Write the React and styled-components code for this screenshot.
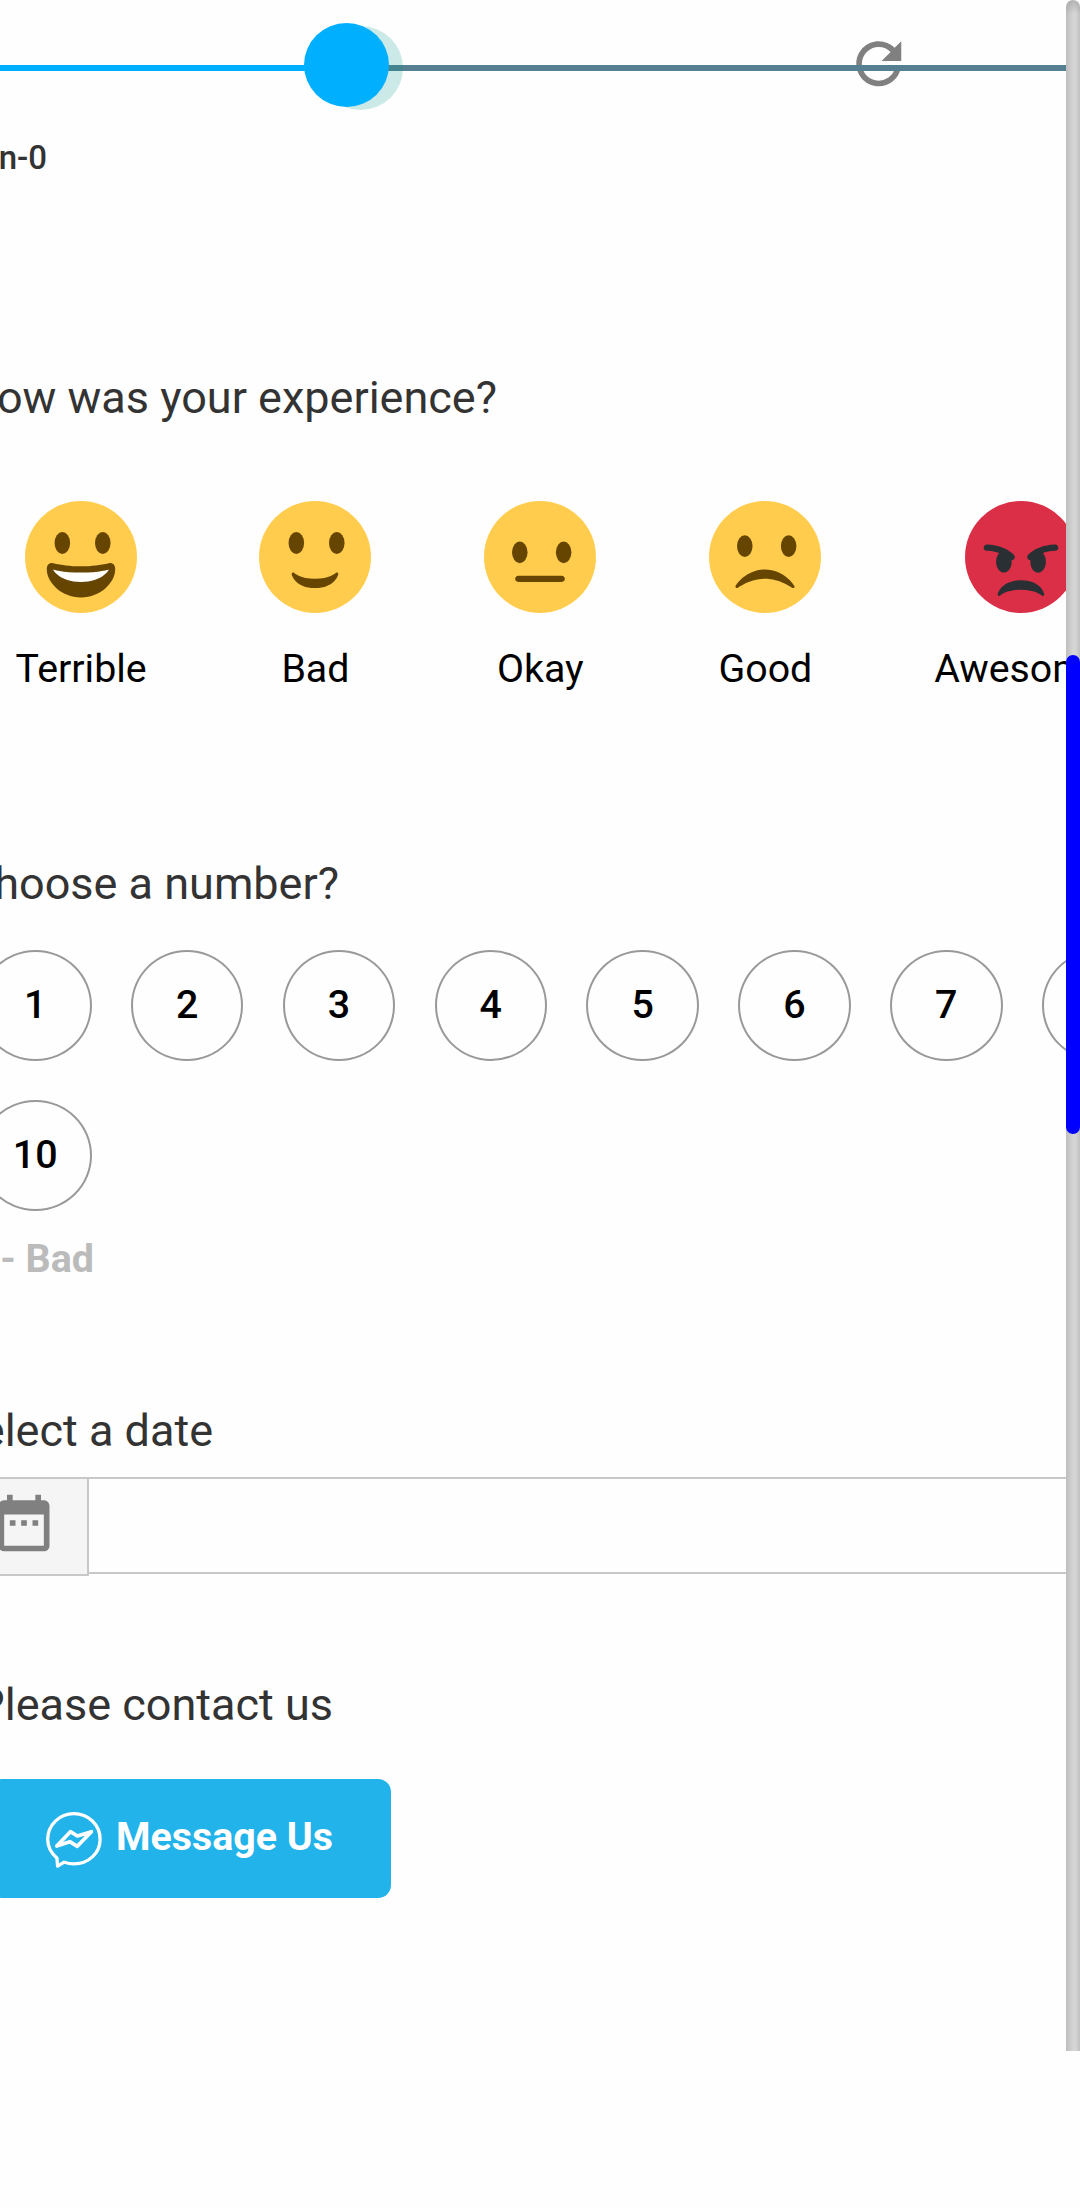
import React from "react";
import styled, { createGlobalStyle } from "styled-components";
import { MdDateRange, MdRefresh } from "react-icons/md";

const GlobalStyle = createGlobalStyle`
  body {
    margin: 0;
    background: #fefefe;
    font-family: Roboto, "Liberation Sans", sans-serif;
  }
  * { box-sizing: border-box; }
`;

const Page = styled.div`
  display: flex;
  align-items: flex-start;
  width: 1080px;
  height: 2208px;
  overflow: hidden;
`;

const Form = styled.main`
  flex: 0 0 1066px;
  height: 2208px;
  overflow: hidden;
`;

const SliderSection = styled.section`
  height: 374px;
`;

const Slider = styled.div`
  position: relative;
  display: flex;
  align-items: center;
  height: 137px;
`;

const ResetIcon = styled(MdRefresh)`
  position: absolute;
  left: 844.75px;
  top: 29.75px;
  width: 67.5px;
  height: 67.5px;
  color: #808080;
`;

const Track = styled.div`
  position: absolute;
  left: 0;
  top: 65px;
  width: 100%;
  height: 6px;
  background: linear-gradient(90deg, #00b0ff 346px, #548092 346px);
`;

const Thumb = styled.div`
  position: absolute;
  left: 304px;
  top: 23px;
  width: 85px;
  height: 84px;
  border-radius: 50%;
  background: #00b0ff;
  box-shadow: 14px 3px 0 rgba(0, 150, 136, 0.2);
`;

const SliderCaption = styled.div`
  display: flex;
  justify-content: flex-end;
  width: 47px;
  line-height: 42px;
  font-size: 33px;
  font-weight: 500;
  color: #333;
  white-space: nowrap;
`;

const Question = styled.h2`
  display: flex;
  justify-content: flex-end;
  width: ${(p) => p.$end}px;
  height: 46px;
  margin: 0;
  padding-top: 1px;
  font-size: 45px;
  font-weight: 400;
  line-height: 46px;
  color: #333;
  white-space: nowrap;
`;

const SmileySection = styled.section`
  height: 486px;
`;

const Smileys = styled.div`
  display: flex;
  gap: 112.5px;
  width: max-content;
  margin-left: 15.6px;
  padding-top: 81px;
`;

const Smiley = styled.div`
  display: flex;
  flex-direction: column;
  align-items: center;
  min-width: 112.5px;
`;

const Face = styled.svg`
  display: block;
  width: 112px;
  height: 112px;
`;

const SmileyLabel = styled.span`
  margin-top: 32px;
  font-size: 39.3px;
  line-height: 48px;
  color: #000;
`;

const NumberSection = styled.section`
  height: 547px;
`;

const Numbers = styled.div`
  display: grid;
  grid-template-columns: repeat(9, 112.5px);
  gap: 39px 39.35px;
  width: max-content;
  margin-left: -21px;
  padding-top: 44px;
`;

const NumberChoice = styled.button`
  height: 111px;
  padding: 0 0 3px;
  border: 2px solid #999;
  border-radius: 50%;
  background: transparent;
  font: 500 39.4px Roboto, "Liberation Sans", sans-serif;
  color: #000;
`;

const ScaleHint = styled.div`
  display: flex;
  justify-content: flex-end;
  width: 94px;
  margin-top: 24px;
  font-size: 39.4px;
  font-weight: 700;
  line-height: 48px;
  color: #bbb;
  white-space: nowrap;
`;

const DateSection = styled.section`
  height: 274px;
`;

const DateGroup = styled.div`
  display: flex;
  align-items: flex-start;
  margin-top: 24px;
`;

const DateAddon = styled.div`
  flex: 0 0 auto;
  display: flex;
  width: 99px;
  height: 99px;
  margin-left: -10px;
  padding-top: 10px;
  border: solid #c8c8c8;
  border-width: 2px 2px 2px 0;
  background: #f5f5f5;
`;

const CalendarIcon = styled(MdDateRange)`
  flex: none;
  width: 68px;
  height: 68px;
  color: #808080;
`;

const DateInput = styled.input`
  flex: 1;
  min-width: 0;
  height: 97px;
  padding: 0 30px;
  border: solid #c8c8c8;
  border-width: 2px 0;
  border-radius: 0;
  background: transparent;
  font: 400 42px Roboto, sans-serif;
`;

const MessageButton = styled.button`
  display: flex;
  align-items: center;
  gap: 12px;
  width: 402px;
  height: 119px;
  margin: 52px 0 0 -11px;
  padding: 5px 0 0 57px;
  border: 0;
  border-radius: 13px;
  background: #22b3ea;
  font: 700 39.4px Roboto, "Liberation Sans", sans-serif;
  color: #fff;
`;

const ButtonText = styled.span`
  padding-bottom: 10px;
  white-space: nowrap;
`;

const MessengerLogo = styled.svg`
  flex: none;
  width: 58px;
  height: 58px;
`;

const ScrollTrack = styled.div`
  flex: 0 0 14px;
  height: 2051px;
  padding-top: 655px;
  border-radius: 7px 7px 0 0;
  background:
    linear-gradient(180deg, rgba(120, 120, 120, 0.35), rgba(120, 120, 120, 0) 14px),
    linear-gradient(90deg, #bebebe, #d6d6d6 55%, #d4d4d4 70%, #c0c0c0);
`;

const ScrollThumb = styled.div`
  height: 479px;
  border-radius: 7px;
  background: #00f;
`;

const MOUTHS = {
  smile:
    "M10.515 23.621C10.56 23.8 11.683 28 18 28c6.318 0 7.44-4.2 7.485-4.379.055-.217-.043-.442-.237-.554-.195-.111-.439-.078-.6.077C24.629 23.163 22.694 25 18 25s-6.63-1.837-6.648-1.855C11.256 23.05 11.128 23 11 23c-.084 0-.169.021-.246.064-.196.112-.294.339-.239.557z",
  grin:
    "M18 21c-3.623 0-6.027-.422-9-1-.679-.131-2 0-2 2 0 4 4.595 9 11 9 6.404 0 11-5 11-9 0-2-1.321-2.132-2-2-2.973.578-5.377 1-9 1z",
  neutral:
    "M25 26H11c-.552 0-1-.447-1-1s.448-1 1-1h14c.553 0 1 .447 1 1s-.447 1-1 1z",
  frown:
    "M8.665 27.871c.178.161.444.171.635.029.039-.029 3.922-2.9 8.7-2.9 4.766 0 8.662 2.871 8.7 2.9.191.142.457.13.635-.029.177-.16.217-.424.094-.628C27.3 27.029 24.212 22 18 22s-9.301 5.028-9.429 5.243c-.123.205-.084.468.094.628z",
};

function YellowFace({ mouth, eyes, eyeY, teeth }) {
  return (
    <Face viewBox="0 0 36 36">
      <circle cx="18" cy="18" r="18" fill="#FFCC4D" />
      {eyes.map((x) => (
        <ellipse key={x} cx={x} cy={eyeY} rx="2.5" ry="3.5" fill="#664500" />
      ))}
      <path d={MOUTHS[mouth]} fill="#664500" />
      {teeth && <path d="M9 22s3 1 9 1 9-1 9-1-2 4-9 4-9-4-9-4z" fill="#fff" />}
    </Face>
  );
}

function AngryFace() {
  return (
    <Face viewBox="0 0 36 36">
      <circle cx="18" cy="18" r="18" fill="#DA2F47" />
      <path
        fill="#292F33"
        d="M25.485 29.879C25.44 29.7 24.317 25.5 18 25.5c-6.318 0-7.44 4.2-7.485 4.379-.055.217.043.442.237.554.195.109.439.079.6-.077.019-.019 1.954-1.856 6.648-1.856s6.63 1.837 6.648 1.855c.096.095.224.145.352.145.084 0 .169-.021.246-.064.196-.112.294-.339.239-.557zm-9.778-12.586C12.452 14.038 7.221 14 7 14c-.552 0-.999.447-.999.998-.001.552.446 1 .998 1.002.029 0 1.925.022 3.983.737-.593.64-.982 1.634-.982 2.763 0 1.934 1.119 3.5 2.5 3.5s2.5-1.566 2.5-3.5c0-.174-.019-.34-.037-.507.013 0 .025.007.037.007.256 0 .512-.098.707-.293.391-.391.391-1.023 0-1.414zM29 14c-.221 0-5.451.038-8.707 3.293-.391.391-.391 1.023 0 1.414.195.195.451.293.707.293.013 0 .024-.007.036-.007-.016.167-.036.333-.036.507 0 1.934 1.119 3.5 2.5 3.5s2.5-1.566 2.5-3.5c0-1.129-.389-2.123-.982-2.763 2.058-.715 3.954-.737 3.984-.737.551-.002.998-.45.997-1.002-.001-.551-.447-.998-.999-.998z"
      />
    </Face>
  );
}

const RATINGS = [
  { label: "Terrible", face: <YellowFace mouth="grin" eyes={[12, 25]} eyeY={13.5} teeth /> },
  { label: "Bad", face: <YellowFace mouth="smile" eyes={[12, 25]} eyeY={13.5} /> },
  { label: "Okay", face: <YellowFace mouth="neutral" eyes={[11.5, 25.6]} eyeY={16.5} /> },
  { label: "Good", face: <YellowFace mouth="frown" eyes={[11.5, 25.6]} eyeY={14.5} /> },
  { label: "Awesome", face: <AngryFace /> },
];

const NUMBERS = [1, 2, 3, 4, 5, 6, 7, 8, 9, 10];

export default function App() {
  return (
    <>
      <GlobalStyle />
      <Page>
        <Form>
          <SliderSection>
            <Slider>
              <ResetIcon />
              <Track />
              <Thumb />
            </Slider>
            <SliderCaption>Min-0</SliderCaption>
          </SliderSection>

          <SmileySection>
            <Question $end={497}>How was your experience?</Question>
            <Smileys>
              {RATINGS.map((r) => (
                <Smiley key={r.label}>
                  {r.face}
                  <SmileyLabel>{r.label}</SmileyLabel>
                </Smiley>
              ))}
            </Smileys>
          </SmileySection>

          <NumberSection>
            <Question $end={339}>Choose a number?</Question>
            <Numbers>
              {NUMBERS.map((n) => (
                <NumberChoice key={n}>{n}</NumberChoice>
              ))}
            </Numbers>
            <ScaleHint>1 - Bad</ScaleHint>
          </NumberSection>

          <DateSection>
            <Question $end={213}>Select a date</Question>
            <DateGroup>
              <DateAddon>
                <CalendarIcon />
              </DateAddon>
              <DateInput type="text" />
            </DateGroup>
          </DateSection>

          <Question $end={333}>Please contact us</Question>
          <MessageButton>
            <MessengerLogo viewBox="0 0 58 58" fill="none" stroke="#fff" strokeLinejoin="round">
              <path
                strokeWidth="3.3"
                d="M10.900 46C5 41 1.700 34.500 1.700 27.300C1.700 12.800 13.500 1.700 27.900 1.700C42.300 1.700 54.100 12.800 54.100 27.200C54.100 41.500 42.300 51.800 28 51.800C24.500 51.800 21.300 51.200 18.200 50.200L11.600 54.100Z"
              />
              <path strokeWidth="3.700" d="M10.800 34L24.400 19.700L31.400 24L45.400 19.700L31.300 34.300L23.800 29.700Z" />
            </MessengerLogo>
            <ButtonText>Message Us</ButtonText>
          </MessageButton>
        </Form>
        <ScrollTrack>
          <ScrollThumb />
        </ScrollTrack>
      </Page>
    </>
  );
}
